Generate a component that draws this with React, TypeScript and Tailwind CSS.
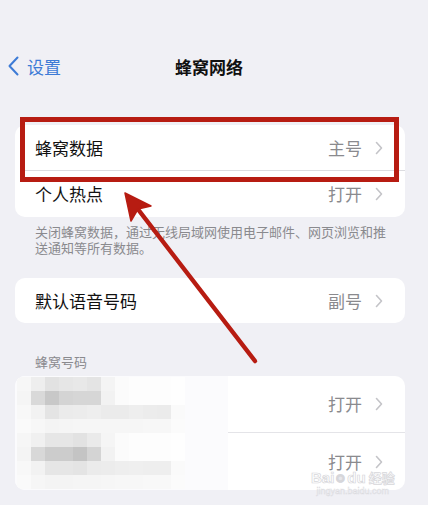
import React from "react";

const FONT = "font-['Noto_Sans_CJK_SC','Noto_Sans',sans-serif]";

// mosaic used to hide the phone numbers in the SIM list
const MOSAIC: number[][] = [
  [0xf7, 0xee, 0xe2, 0xe6, 0xe8, 0xe4, 0xf4, 0xfb, 0xfd, 0xfd, 0xfd, 0xfe],
  [0xf5, 0xd9, 0xc8, 0xd4, 0xd6, 0xd6, 0xf2, 0xfb, 0xfd, 0xfd, 0xfd, 0xfe],
  [0xf8, 0xf2, 0xe4, 0xeb, 0xec, 0xee, 0xeb, 0xeb, 0xee, 0xec, 0xeb, 0xfa],
  [0xfa, 0xf7, 0xf4, 0xf5, 0xf6, 0xf6, 0xf6, 0xf6, 0xf6, 0xf7, 0xf7, 0xfb],
  [0xf6, 0xf0, 0xe6, 0xe6, 0xe2, 0xea, 0xf5, 0xfb, 0xfd, 0xfd, 0xfd, 0xfe],
  [0xf4, 0xd8, 0xcc, 0xcc, 0xc4, 0xd4, 0xf2, 0xfb, 0xfd, 0xfd, 0xfd, 0xfe],
  [0xf8, 0xf2, 0xe6, 0xe6, 0xe4, 0xeb, 0xec, 0xee, 0xef, 0xee, 0xee, 0xfa],
  [0xfa, 0xf6, 0xf4, 0xf4, 0xf5, 0xf5, 0xf6, 0xf7, 0xf7, 0xf8, 0xf8, 0xfb],
];

function Chevron() {
  return (
    <svg width="8" height="14" viewBox="0 0 8 14" className="shrink-0">
      <path d="M1.5 1.5 L6.5 7 L1.5 12.5" fill="none" stroke="#c4c4c8" strokeWidth="1.6" strokeLinecap="round" strokeLinejoin="round" />
    </svg>
  );
}

function Row({ label, value, h }: { label?: string; value: string; h: string }) {
  return (
    <div className={`flex items-center ${h} pl-[20px] pr-[22px]`}>
      <span className="flex-1 text-[17px] text-[#111]">{label}</span>
      <span className="text-[17px] text-[#8a8a8e] mr-[13px]">{value}</span>
      <Chevron />
    </div>
  );
}

export default function App() {
  return (
    <div className={`relative w-[428px] h-[505px] overflow-hidden bg-[#f0f0f5] ${FONT}`}>
      {/* navigation bar */}
      <div className="relative h-[28px] mt-[52px] flex items-center">
        <div className="flex items-center pl-[7px] text-[#3d7bd6]">
          <svg width="13" height="20" viewBox="0 0 13 20">
            <path d="M10.5 1.5 L2.5 10 L10.5 18.5" fill="none" stroke="#3d7bd6" strokeWidth="2" strokeLinecap="round" strokeLinejoin="round" />
          </svg>
          <span className="ml-[7px] text-[17px] leading-none">设置</span>
        </div>
        <div className="absolute inset-x-0 text-center pr-[10px] text-[17px] font-bold text-[#111] leading-none pointer-events-none">
          蜂窝网络
        </div>
      </div>

      {/* cellular data group */}
      <div className="mt-[45px] ml-[15px] mr-[23px] bg-white rounded-[10px] overflow-hidden">
        <Row label="蜂窝数据" value="主号" h="h-[45px]" />
        <div className="ml-[10px] h-px bg-[#dcdce0]" />
        <Row label="个人热点" value="打开" h="h-[46px]" />
      </div>
      <p className="mt-[7px] pl-[35px] pr-[30px] text-[13px] leading-[16px] text-[#8a8a8e]">
        关闭蜂窝数据，通过无线局域网使用电子邮件、网页浏览和推送通知等所有数据。
      </p>

      {/* default voice line */}
      <div className="mt-[22px] ml-[15px] mr-[23px] bg-white rounded-[10px]">
        <Row label="默认语音号码" value="副号" h="h-[45px]" />
      </div>

      {/* SIM list */}
      <div className="mt-[31px] pl-[35px] text-[13px] leading-[16px] text-[#8a8a8e]">蜂窝号码</div>
      <div className="relative mt-[6px] ml-[15px] mr-[23px] bg-white rounded-[10px] overflow-hidden">
        <Row value="打开" h="h-[56px]" />
        <div className="ml-[213px] h-px bg-[#e4e4e8]" />
        <Row value="打开" h="h-[57px]" />
        <div className="absolute left-0 top-0 bottom-0 w-[213px] bg-[#fbfbfd] flex flex-col pt-px pl-[2px]">
          {MOSAIC.map((row, r) => (
            <div key={r} className="flex">
              {row.map((v, c) => (
                <div key={c} className="w-[14px] h-[14px]" style={{ backgroundColor: `rgb(${v},${v},${v})` }} />
              ))}
            </div>
          ))}
        </div>
      </div>

      {/* highlight frame */}
      <div className="absolute left-[20px] top-[117px] w-[379px] h-[65px] border-[5px] border-[#b71c12] pointer-events-none" />

      {/* pointer arrow */}
      <svg className="absolute inset-0 pointer-events-none" width="428" height="505" viewBox="0 0 428 505">
        <line x1="255" y1="361" x2="137" y2="208" stroke="#b71c12" strokeWidth="4.5" strokeLinecap="round" />
        <polygon points="125,193 151,206 138,209 131,221" fill="#b71c12" stroke="#b71c12" strokeWidth="1.5" strokeLinejoin="round" />
      </svg>

      {/* watermark */}
      <div className="absolute left-[311px] top-[470px] flex flex-col items-center pointer-events-none text-transparent [-webkit-text-stroke:0.7px_#d6d6da] font-['Liberation_Sans',sans-serif]">
        <div className="flex items-center gap-[2px] text-[15px] font-bold leading-none">
          <span>Bai</span>
          <span className="text-[#e6e6ea] text-[10px]">◉</span>
          <span>du</span>
          <span className={`ml-[1px] text-[13px] ${FONT}`}>经验</span>
        </div>
        <div className="mt-[2px] text-[9px] leading-none [-webkit-text-stroke:0.4px_#dadade]">jingyan.baidu.com</div>
      </div>
    </div>
  );
}
